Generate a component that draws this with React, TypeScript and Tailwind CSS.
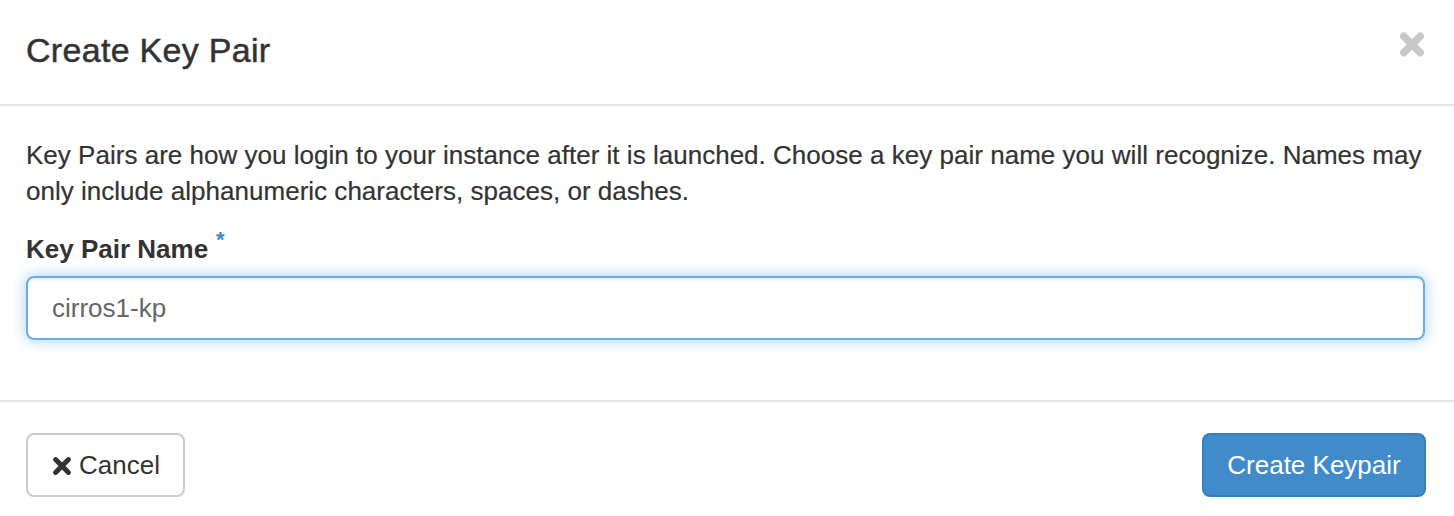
import React from "react";

function TimesIcon({ className, color, sw }: { className: string; color: string; sw: number }) {
  return (
    <svg viewBox="0 0 24 24" className={className} fill="none">
      <path d="M5 5 L19 19 M19 5 L5 19" stroke={color} strokeWidth={sw} strokeLinecap="round" />
    </svg>
  );
}

export default function App() {
  return (
    <div className="w-[1454px] h-[516px] overflow-hidden bg-white text-[#333] font-['Liberation_Sans',Arial,sans-serif]">
      <div className="h-[106px] px-[26px] flex items-center justify-between border-b-2 border-[#e5e5e5]">
        <h4 className="text-[34px] leading-[48px] font-normal tracking-[0.3px] pb-[4px] [-webkit-text-stroke:0.5px_#333]">Create Key Pair</h4>
        <button className="w-[28px] h-[28px] mr-[2px] mb-[16px] flex items-center justify-center">
          <TimesIcon className="w-[35px] h-[35px]" color="#c8c8c8" sw={6.5} />
        </button>
      </div>
      <div className="h-[296px] px-[26px] pt-[31px] border-b-2 border-[#e5e5e5]">
        <p className="text-[26px] leading-[36px] tracking-[0.02px] pr-[4px] [-webkit-text-stroke:0.2px_#333]">
          Key Pairs are how you login to your instance after it is launched. Choose a key pair name you will recognize. Names may only include alphanumeric characters, spaces, or dashes.
        </p>
        <div className="mt-[22px] flex items-start">
          <label className="text-[26px] leading-[36px] font-bold">Key Pair Name</label>
          <span className="ml-[8px] text-[22px] leading-[22px] font-bold text-[#3b88c8] -mt-[2px]">*</span>
        </div>
        <input
          readOnly
          defaultValue="cirros1-kp"
          className="mt-[9px] block w-[1399px] h-[64px] rounded-[8px] border-2 border-[#66afe9] px-[24px] text-[26px] text-[#666] outline-none shadow-[inset_0_2px_2px_rgba(0,0,0,0.075),0_0_15px_rgba(102,175,233,0.6)] font-['Liberation_Sans',Arial,sans-serif]"
        />
      </div>
      <div className="pl-[26px] pr-[28px] pt-[31px] flex justify-between items-start">
        <button className="h-[64px] w-[159px] rounded-[8px] border-2 border-[#ccc] bg-white flex items-center pl-[23px] text-[26px] text-[#333]">
          <TimesIcon className="w-[22px] h-[22px] mr-[6px] mt-[2px]" color="#333" sw={5.5} />
          <span>Cancel</span>
        </button>
        <button className="h-[64px] w-[224px] rounded-[8px] border-2 border-[#357ebd] bg-[#428bca] text-white text-[26px] flex items-center justify-center">
          Create Keypair
        </button>
      </div>
    </div>
  );
}
